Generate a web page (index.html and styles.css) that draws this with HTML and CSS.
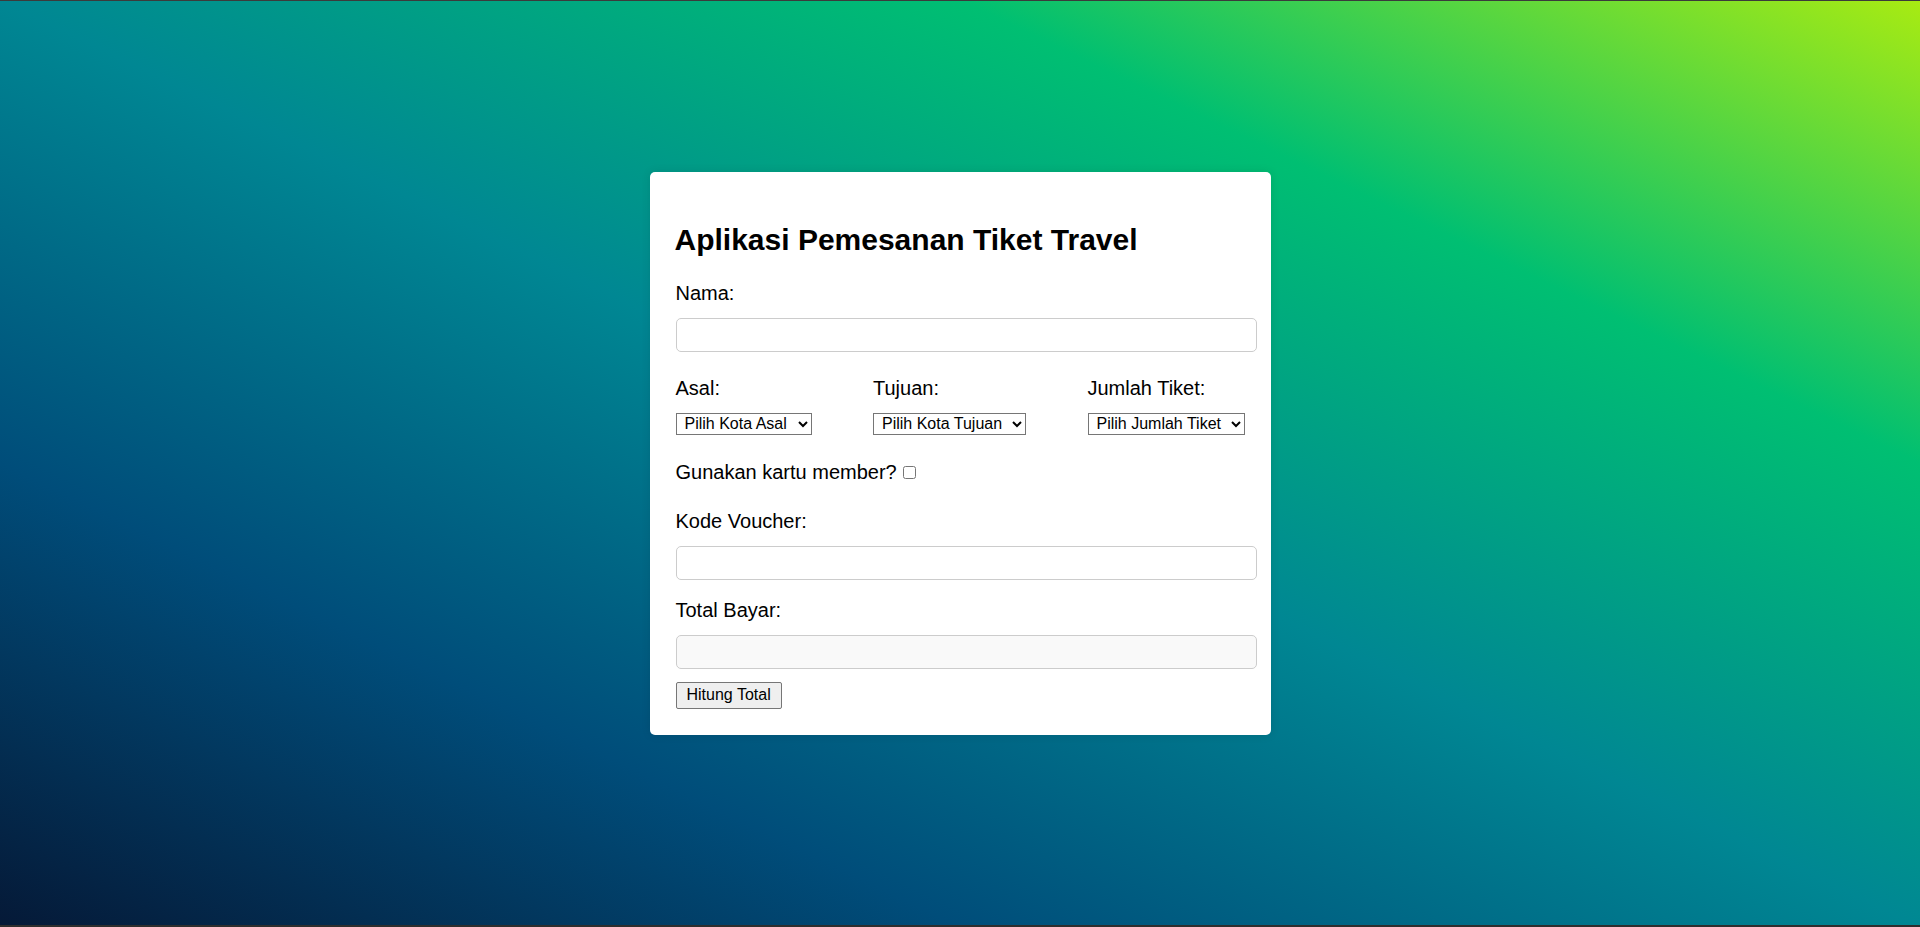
FILE: index.html
```html
<!DOCTYPE html>
<html lang="id">
<head>
<meta charset="UTF-8">
<title>Aplikasi Pemesanan Tiket Travel</title>
<link rel="stylesheet" href="styles.css">
</head>
<body>
  <div class="card">
    <h2 class="title">Aplikasi Pemesanan Tiket Travel</h2>

    <label class="field-label" for="nama">Nama:</label>
    <input class="text-input gap-lg" type="text" id="nama">

    <div class="select-row">
      <div class="select-col">
        <label class="field-label" for="asal">Asal:</label>
        <select id="asal" class="select">
          <option>Pilih Kota Asal</option>
        </select>
      </div>
      <div class="select-col">
        <label class="field-label" for="tujuan">Tujuan:</label>
        <select id="tujuan" class="select">
          <option>Pilih Kota Tujuan</option>
        </select>
      </div>
      <div class="select-col">
        <label class="field-label" for="jumlah">Jumlah Tiket:</label>
        <select id="jumlah" class="select">
          <option>Pilih Jumlah Tiket</option>
        </select>
      </div>
    </div>

    <div class="member-line">
      <label for="member">Gunakan kartu member?</label><input class="checkbox" type="checkbox" id="member">
    </div>

    <label class="field-label" for="voucher">Kode Voucher:</label>
    <input class="text-input gap-md" type="text" id="voucher">

    <label class="field-label" for="total">Total Bayar:</label>
    <input class="text-input readonly gap-sm" type="text" id="total" readonly>

    <button class="btn" type="button">Hitung Total</button>
  </div>
</body>
</html>
```

FILE: styles.css
```css
html {
  margin: 0;
  padding: 0;
}

body {
  margin: 0;
  min-height: 100vh;
  box-sizing: border-box;
  padding-bottom: 20px;
  display: flex;
  justify-content: center;
  align-items: center;
  font-family: "Liberation Sans", Arial, sans-serif;
  color: #000;
  background: linear-gradient(to right top, #051937, #004d7a, #008793, #00bf72, #a8eb12);
  box-shadow: inset 0 1px 0 #3b3b3b, inset 0 -2px 0 #2e2e2e;
}

.card {
  width: 569px;
  padding: 26px;
  background: #fff;
  border-radius: 5px;
  box-shadow: 0 0 10px rgba(0, 0, 0, 0.1);
  display: flex;
  flex-direction: column;
  align-items: flex-start;
}

.title {
  font-size: 30px;
  font-weight: bold;
  line-height: 34.5px;
  margin: 25px 0 24px -1px;
}

.field-label {
  display: block;
  font-size: 20px;
  line-height: 23px;
  margin-bottom: 13px;
}

.text-input {
  width: 581px;
  height: 34px;
  box-sizing: border-box;
  padding: 5px;
  border: 1px solid #ccc;
  border-radius: 5px;
  background: #fff;
  font-family: "Liberation Sans", Arial, sans-serif;
  font-size: 16px;
  margin: 0;
}

.text-input.readonly {
  background: #f9f9f9;
}

.gap-lg {
  margin-bottom: 25px;
}

.gap-md {
  margin-bottom: 19.5px;
}

.gap-sm {
  margin-bottom: 12.5px;
}

.select-row {
  align-self: stretch;
  display: flex;
  justify-content: space-between;
  margin-bottom: 26px;
}

.select-col {
  display: flex;
  flex-direction: column;
  align-items: flex-start;
}

.select {
  height: 22px;
  padding: 0 6px 0 4px;
  font-family: "Liberation Sans", Arial, sans-serif;
  font-size: 16px;
  color: #000;
  background-color: #fff;
  border: 1px solid #767676;
  border-radius: 0;
  margin: 0;
}

.member-line {
  font-size: 20px;
  line-height: 23px;
  margin-bottom: 26px;
}

.checkbox {
  width: 13px;
  height: 13px;
  margin: 0 0 0 6px;
}

.btn {
  height: 27px;
  padding: 0 10px;
  font-family: "Liberation Sans", Arial, sans-serif;
  font-size: 16px;
  color: #000;
  background: #efefef;
  border: 1px solid #767676;
  border-radius: 2px;
  margin: 0;
}
```
